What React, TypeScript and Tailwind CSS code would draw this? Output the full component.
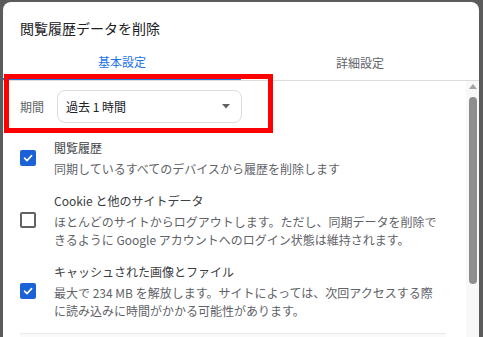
import React from "react";

const font = { fontFamily: '"Noto Sans CJK JP", "Noto Sans", sans-serif' };

function Check({ checked }: { checked: boolean }) {
  if (checked) {
    return (
      <div className="w-[16px] h-[16px] rounded-[2px] bg-[#1a62d6] flex items-center justify-center">
        <svg width="12" height="12" viewBox="0 0 12 12">
          <path d="M2.5 6.2 L5 8.6 L9.6 3.6" fill="none" stroke="#fff" strokeWidth="1.6" strokeLinecap="round" strokeLinejoin="round" />
        </svg>
      </div>
    );
  }
  return <div className="w-[16px] h-[16px] rounded-[2px] border-2 border-[#5f6368] bg-white" />;
}

function Item({ checked, title, lines }: { checked: boolean; title: string; lines: string[] }) {
  return (
    <div className="flex items-center shrink-0">
      <div className="w-[51px] pl-[17px] flex items-center">
        <Check checked={checked} />
      </div>
      <div className="flex flex-col">
        <div className="h-[20px] leading-[20px] text-[12px] text-[#3c4043] whitespace-nowrap">{title}</div>
        <div className="mt-[2px] text-[12px] leading-[18px] text-[#5f6368] whitespace-nowrap">
          {lines.map((l, i) => (
            <div key={i}>{l}</div>
          ))}
        </div>
      </div>
    </div>
  );
}

export default function App() {
  return (
    <div className="w-[483px] h-[337px] bg-[#5b5b5b] pt-[2px] pl-[3px] pr-[4px] overflow-hidden" style={font}>
      <div className="relative w-[476px] bg-white rounded-t-[8px] flex flex-col">
        <div className="shrink-0 pt-[16px] pl-[17px] h-[42px] text-[14px] leading-[20px] text-[#202124]">閲覧履歴データを削除</div>
        <div className="shrink-0 flex h-[37px] border-b border-[#dadce0] text-[12px]">
          <div className="w-[238px] flex flex-col">
            <div className="flex-1 flex items-center justify-center text-[#1a73e8] pt-[1px]">基本設定</div>
            <div className="h-[2px] bg-[#1a73e8]" />
          </div>
          <div className="w-[238px] flex items-center justify-center text-[#5f6368] pt-[1px]">詳細設定</div>
        </div>
        <div className="shrink-0 flex">
          <div className="w-[463px] flex flex-col pb-[20px]">
            <div className="shrink-0 flex items-center pt-[9px] h-[42px]">
              <div className="pl-[17px] w-[54px] text-[12px] text-[#5f6368]">期間</div>
              <div className="w-[185px] h-[33px] border border-[#dadce0] rounded-[8px] flex items-center justify-between pl-[8px] pr-[11px]">
                <span className="text-[12px] text-[#202124]">過去 1 時間</span>
                <svg width="8" height="5" viewBox="0 0 8 5">
                  <path d="M0 0 L8 0 L4 4.5 Z" fill="#5f6368" />
                </svg>
              </div>
            </div>
            <div className="shrink-0 flex flex-col gap-[13px] mt-[15px]">
              <Item checked title="閲覧履歴" lines={["同期しているすべてのデバイスから履歴を削除します"]} />
              <Item
                checked={false}
                title="Cookie と他のサイトデータ"
                lines={["ほとんどのサイトからログアウトします。ただし、同期データを削除で", "きるように Google アカウントへのログイン状態は維持されます。"]}
              />
              <Item
                checked
                title="キャッシュされた画像とファイル"
                lines={["最大で 234 MB を解放します。サイトによっては、次回アクセスする際", "に読み込みに時間がかかる可能性があります。"]}
              />
            </div>
            <div className="shrink-0 ml-[17px] w-[426px] mt-[13px] h-[10px] border-t border-[#e8eaed] bg-[#fafafa]" />
          </div>
          <div className="w-[13px] bg-[#f8f8f8] flex flex-col items-center">
            <svg width="8" height="6" viewBox="0 0 8 6" className="mt-[3px]">
              <path d="M0 5 L8 5 L4 0 Z" fill="#a3a3a3" />
            </svg>
            <div className="mt-[7px] w-[8px] h-[187px] rounded-full bg-[#8e8e8e]" />
          </div>
        </div>
        <div className="absolute left-[1px] top-[72px] w-[269px] h-[59px] border-[5px] border-[#ff0000]" />
      </div>
    </div>
  );
}
